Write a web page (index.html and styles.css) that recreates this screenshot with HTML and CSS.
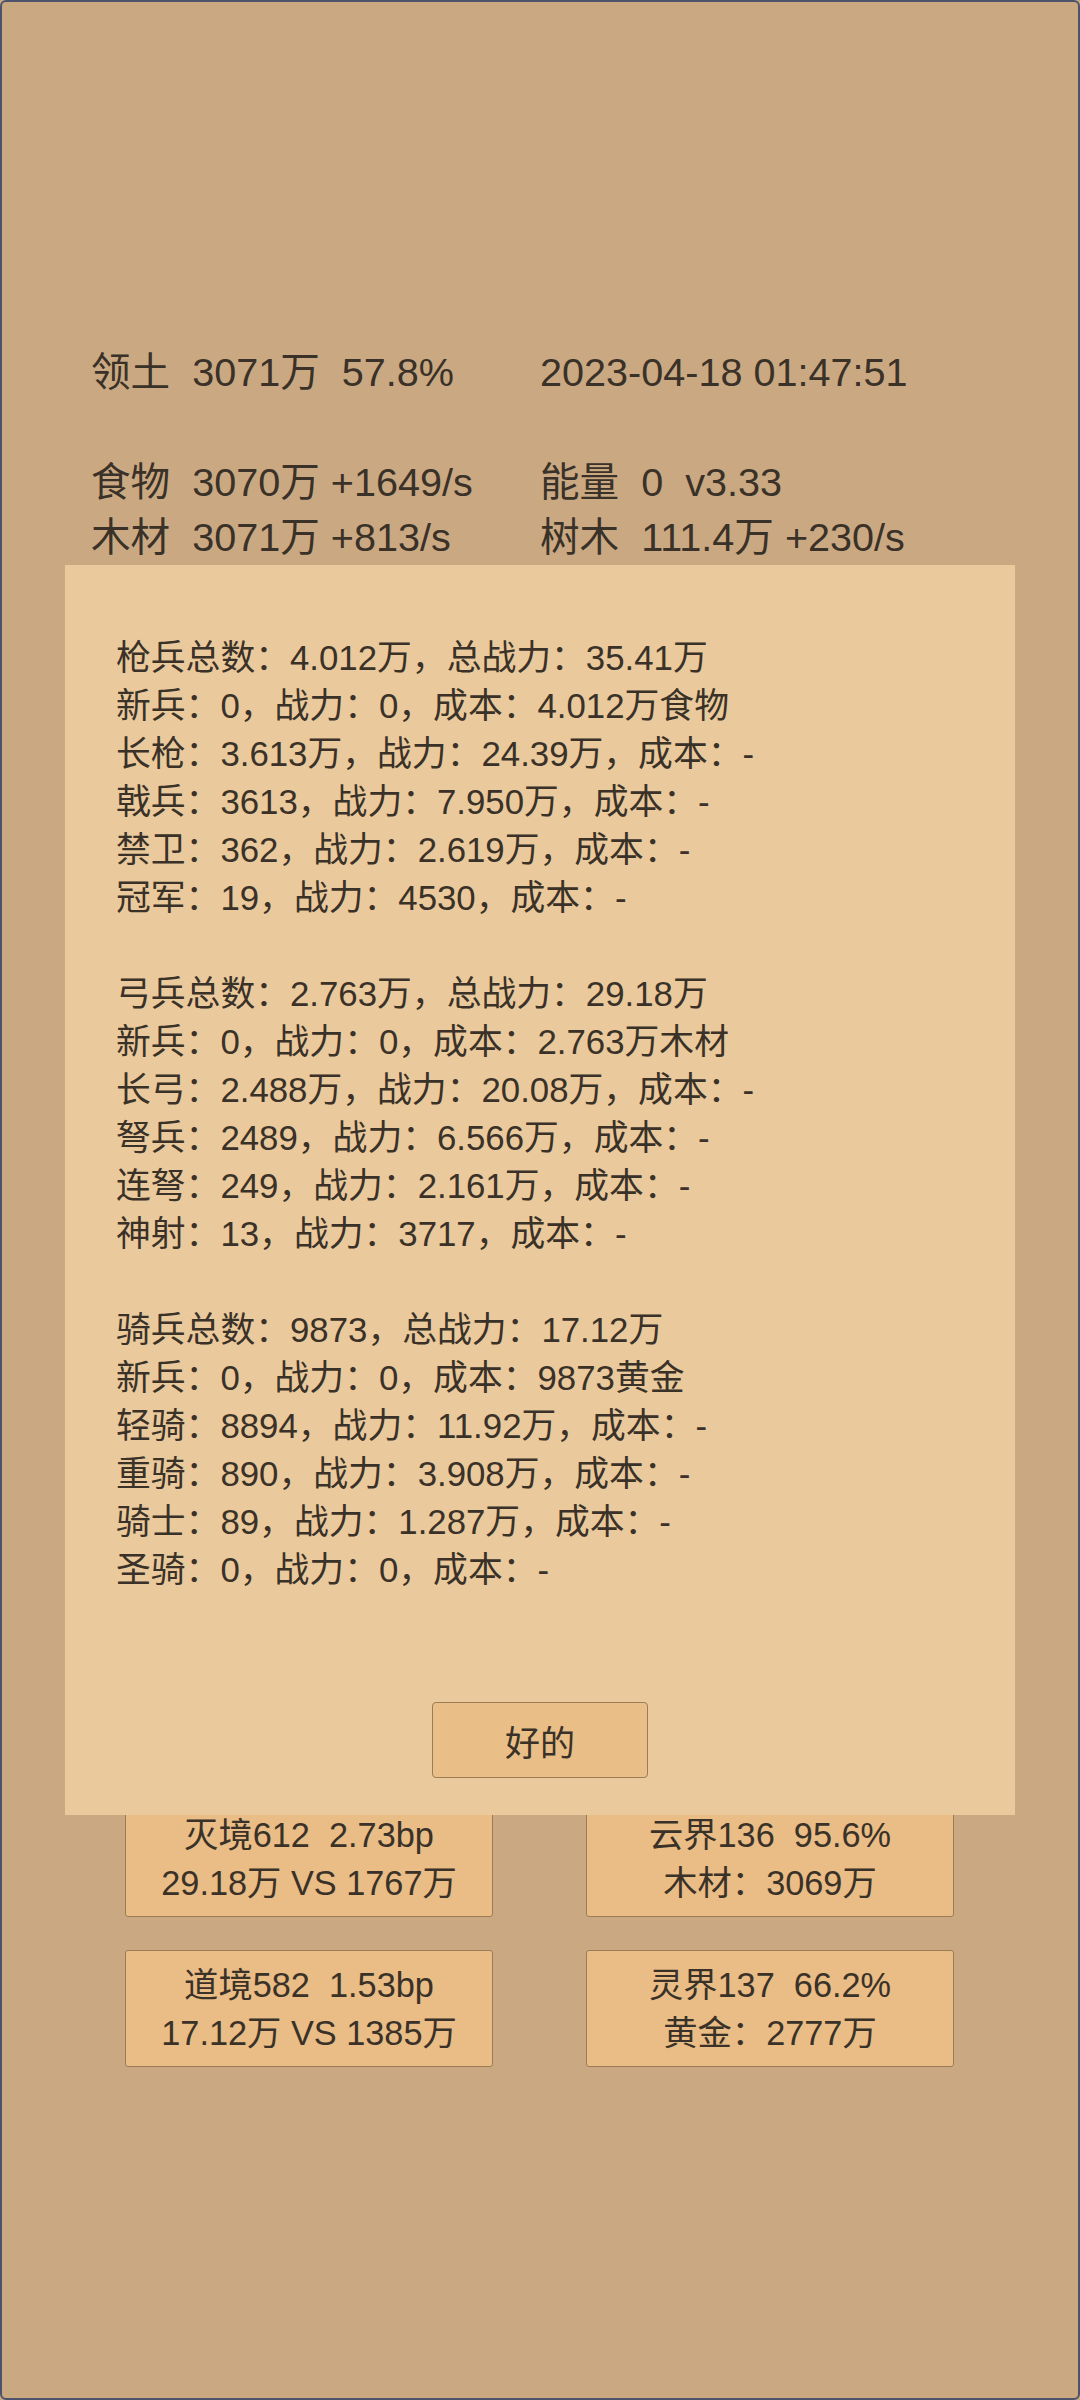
FILE: index.html
```html
<!DOCTYPE html>
<html lang="zh">
<head>
<meta charset="utf-8">
<title>Game</title>
<link rel="stylesheet" href="styles.css">
</head>
<body>
<div class="screen">
  <div class="stats">
    <div class="cell">领土  3071万  57.8%</div>
    <div class="cell">2023-04-18 01:47:51</div>
    <div class="cell empty"></div>
    <div class="cell empty"></div>
    <div class="cell">食物  3070万 +1649/s</div>
    <div class="cell">能量  0  v3.33</div>
    <div class="cell">木材  3071万 +813/s</div>
    <div class="cell">树木  111.4万 +230/s</div>
  </div>

  <div class="cards">
    <div class="card"><div>灭境612  2.73bp</div><div>29.18万 VS 1767万</div></div>
    <div class="card"><div>云界136  95.6%</div><div>木材：3069万</div></div>
    <div class="card"><div>道境582  1.53bp</div><div>17.12万 VS 1385万</div></div>
    <div class="card"><div>灵界137  66.2%</div><div>黄金：2777万</div></div>
  </div>

  <div class="dialog">
    <div class="report">
      <div class="line">枪兵总数：4.012万，总战力：35.41万</div>
      <div class="line">新兵：0，战力：0，成本：4.012万食物</div>
      <div class="line">长枪：3.613万，战力：24.39万，成本：-</div>
      <div class="line">戟兵：3613，战力：7.950万，成本：-</div>
      <div class="line">禁卫：362，战力：2.619万，成本：-</div>
      <div class="line">冠军：19，战力：4530，成本：-</div>
      <div class="line blank"></div>
      <div class="line">弓兵总数：2.763万，总战力：29.18万</div>
      <div class="line">新兵：0，战力：0，成本：2.763万木材</div>
      <div class="line">长弓：2.488万，战力：20.08万，成本：-</div>
      <div class="line">弩兵：2489，战力：6.566万，成本：-</div>
      <div class="line">连弩：249，战力：2.161万，成本：-</div>
      <div class="line">神射：13，战力：3717，成本：-</div>
      <div class="line blank"></div>
      <div class="line">骑兵总数：9873，总战力：17.12万</div>
      <div class="line">新兵：0，战力：0，成本：9873黄金</div>
      <div class="line">轻骑：8894，战力：11.92万，成本：-</div>
      <div class="line">重骑：890，战力：3.908万，成本：-</div>
      <div class="line">骑士：89，战力：1.287万，成本：-</div>
      <div class="line">圣骑：0，战力：0，成本：-</div>
    </div>
    <div class="actions">
      <button class="ok" type="button">好的</button>
    </div>
  </div>
</div>
</body>
</html>
```
FILE: styles.css
```css
html, body {
  margin: 0;
  padding: 0;
  background: #caa982;
}

.screen {
  position: relative;
  box-sizing: border-box;
  width: 1080px;
  height: 2400px;
  border: 2px solid #4e536c;
  border-radius: 6px;
  background: #caa982;
  color: #3a3128;
  font-family: "Liberation Sans", "Noto Sans CJK SC", sans-serif;
  overflow: hidden;
}

.stats {
  display: grid;
  grid-template-columns: 449px 1fr;
  margin-top: 343px;
  padding-left: 89px;
  font-size: 39.6px;
  line-height: 55px;
}

.cell {
  white-space: pre;
  height: 55px;
}

.cards {
  display: grid;
  grid-template-columns: 368px 368px;
  column-gap: 93px;
  row-gap: 33px;
  margin-top: 1235px;
  padding-left: 123px;
}

.card {
  box-sizing: border-box;
  height: 117px;
  display: flex;
  flex-direction: column;
  justify-content: center;
  align-items: center;
  background: #e9bd85;
  border: 1px solid #9c7b57;
  border-radius: 3px;
  font-size: 34.3px;
  line-height: 48px;
  white-space: pre;
}

.dialog {
  position: absolute;
  left: 63px;
  top: 563px;
  box-sizing: border-box;
  width: 950px;
  height: 1250px;
  background: #eaca9c;
  padding: 69px 0 0 51px;
  display: flex;
  flex-direction: column;
}

.report {
  font-size: 34.8px;
  line-height: 48px;
}

.line {
  height: 48px;
  white-space: pre;
}

.actions {
  display: flex;
  justify-content: center;
  margin-top: 108px;
  margin-left: -51px;
}

.ok {
  box-sizing: border-box;
  width: 216px;
  height: 76px;
  background: #e9bf87;
  border: 1px solid #9c7b57;
  border-radius: 4px;
  color: #3a3128;
  font-family: "Liberation Sans", "Noto Sans CJK SC", sans-serif;
  font-size: 35px;
  padding: 0;
}
```
